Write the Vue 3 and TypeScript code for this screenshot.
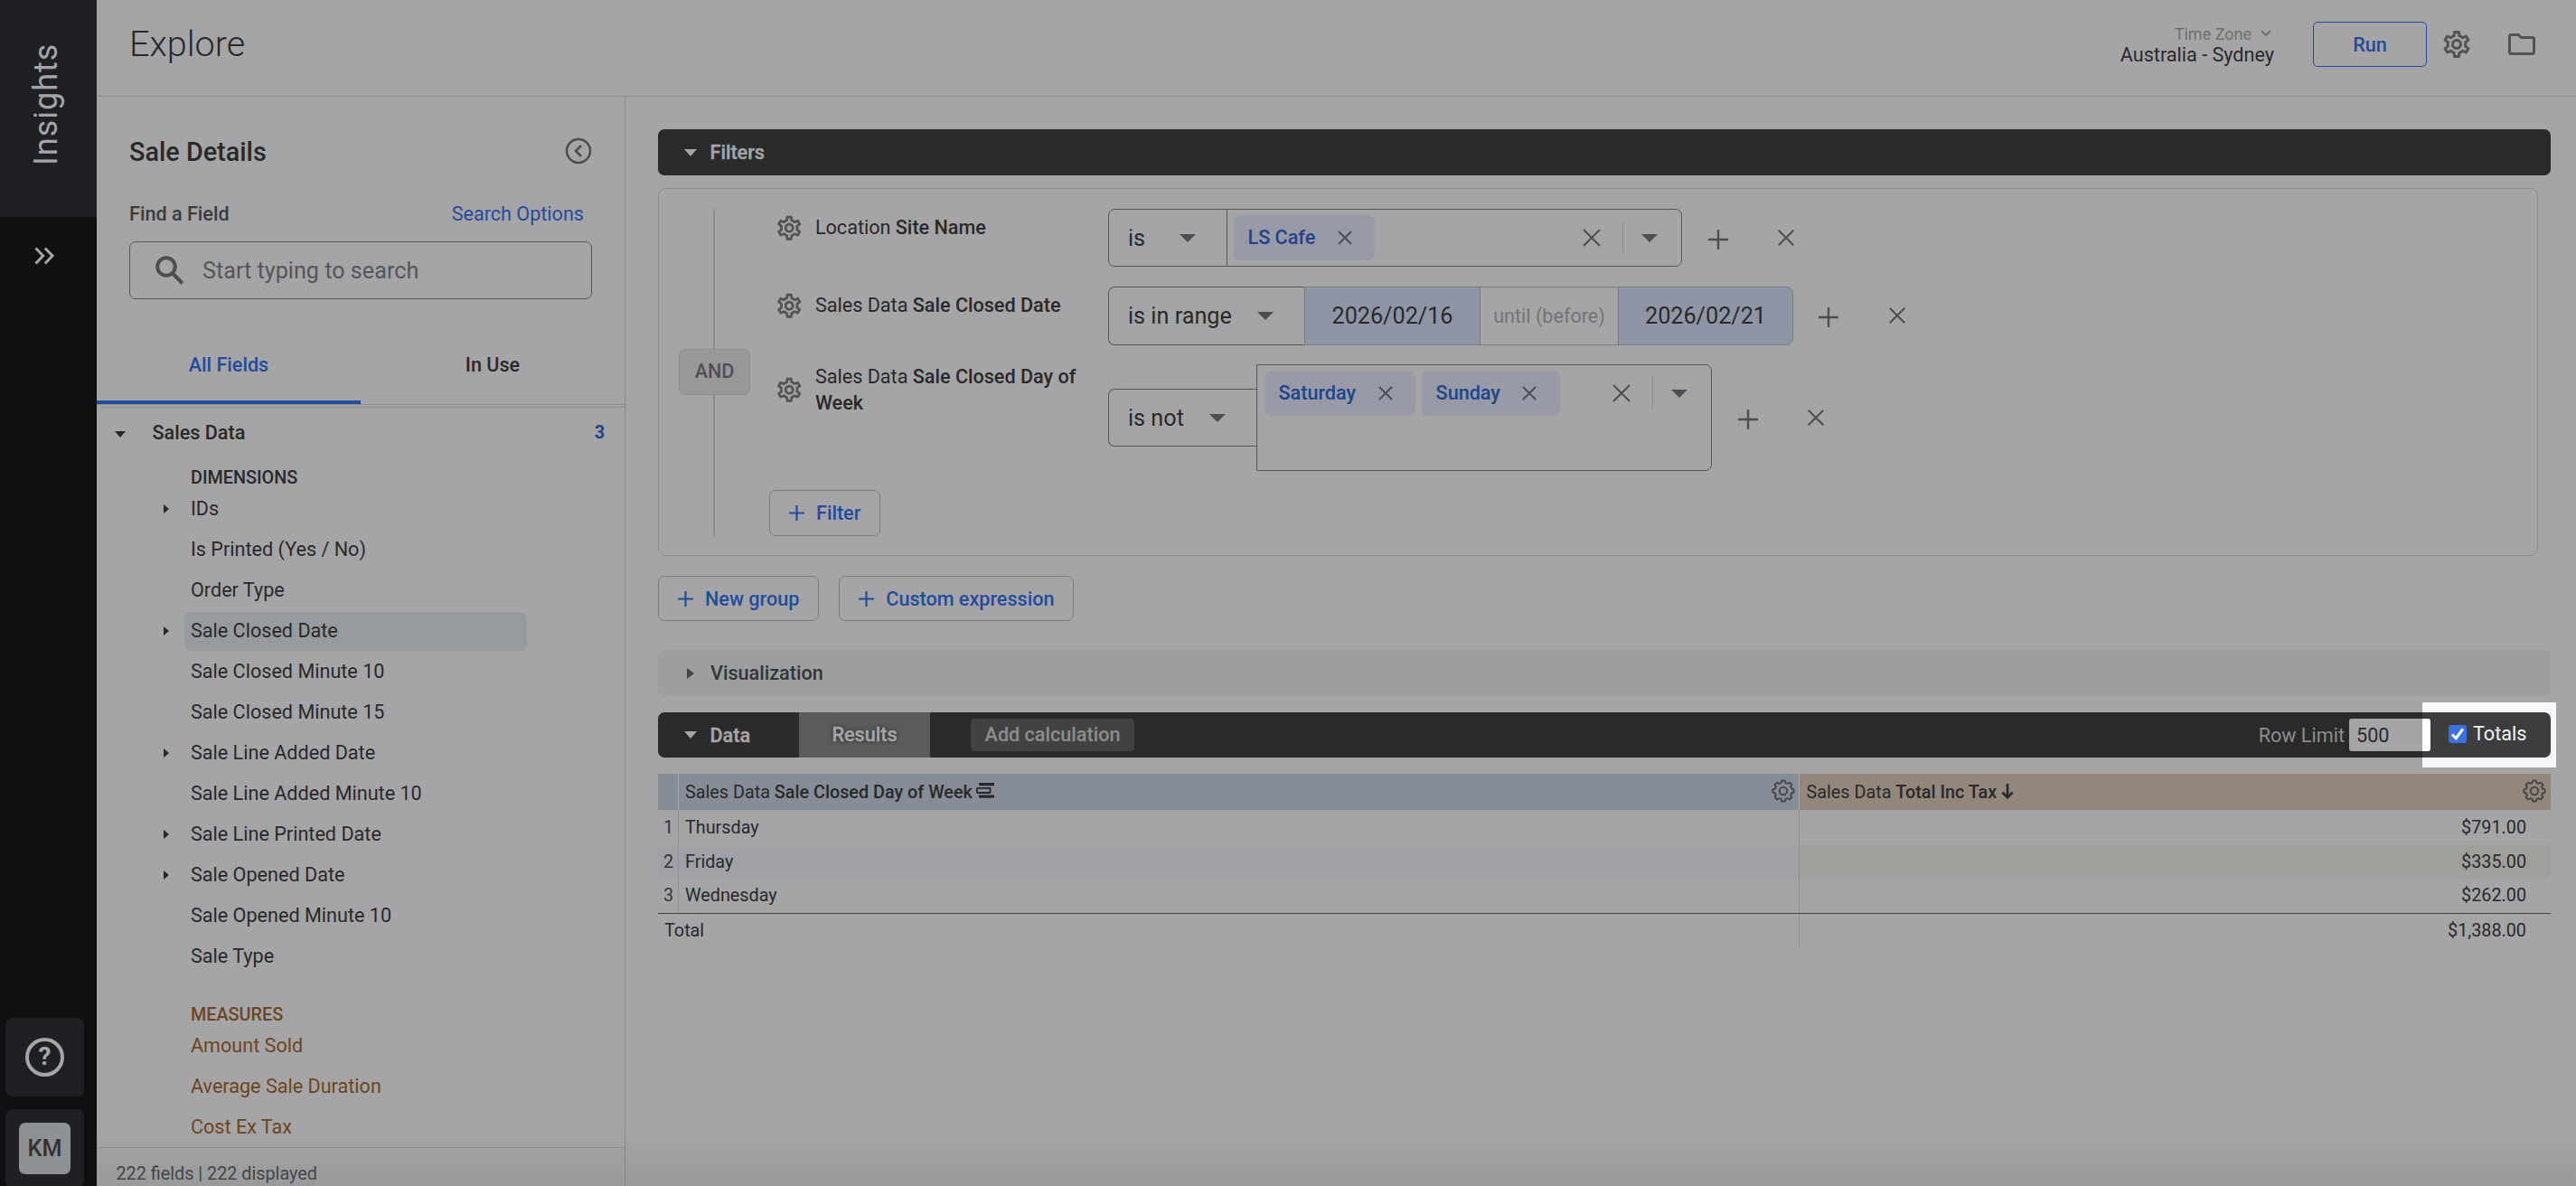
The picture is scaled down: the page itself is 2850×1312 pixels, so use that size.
<script setup lang="ts">
interface FieldItem {
  label: string
  group?: boolean
  selected?: boolean
}

interface FilterRow {
  view: string
  field: string
  op: string
  kind: 'one' | 'range' | 'many'
  chips: string[]
}

interface ResultRow {
  day: string
  total: string
}

const dimensions: FieldItem[] = [
  { label: 'IDs', group: true },
  { label: 'Is Printed (Yes / No)' },
  { label: 'Order Type' },
  { label: 'Sale Closed Date', group: true, selected: true },
  { label: 'Sale Closed Minute 10' },
  { label: 'Sale Closed Minute 15' },
  { label: 'Sale Line Added Date', group: true },
  { label: 'Sale Line Added Minute 10' },
  { label: 'Sale Line Printed Date', group: true },
  { label: 'Sale Opened Date', group: true },
  { label: 'Sale Opened Minute 10' },
  { label: 'Sale Type' },
]

const measures: string[] = ['Amount Sold', 'Average Sale Duration', 'Cost Ex Tax']

const filters: FilterRow[] = [
  { view: 'Location', field: 'Site Name', op: 'is', kind: 'one', chips: ['LS Cafe'] },
  { view: 'Sales Data', field: 'Sale Closed Date', op: 'is in range', kind: 'range', chips: [] },
  { view: 'Sales Data', field: 'Sale Closed Day of Week', op: 'is not', kind: 'many', chips: ['Saturday', 'Sunday'] },
]

const results: ResultRow[] = [
  { day: 'Thursday', total: '$791.00' },
  { day: 'Friday', total: '$335.00' },
  { day: 'Wednesday', total: '$262.00' },
]

const gearPath =
  'M19.43 12.98c.04-.32.07-.64.07-.98 0-.34-.03-.66-.07-.98l2.11-1.65c.19-.15.24-.42.12-.64l-2-3.46c-.09-.16-.26-.25-.44-.25-.06 0-.12.01-.17.03l-2.49 1c-.52-.4-1.08-.73-1.69-.98l-.38-2.65C14.46 2.18 14.25 2 14 2h-4c-.25 0-.46.18-.49.42l-.38 2.65c-.61.25-1.17.59-1.69.98l-2.49-1c-.06-.02-.12-.03-.18-.03-.17 0-.34.09-.43.25l-2 3.46c-.13.22-.07.49.12.64l2.11 1.65c-.04.32-.07.65-.07.98 0 .33.03.66.07.98l-2.11 1.65c-.19.15-.24.42-.12.64l2 3.46c.09.16.26.25.44.25.06 0 .12-.01.17-.03l2.49-1c.52.4 1.08.73 1.69.98l.38 2.65c.03.24.24.42.49.42h4c.25 0 .46-.18.49-.42l.38-2.65c.61-.25 1.17-.59 1.69-.98l2.49 1c.06.02.12.03.18.03.17 0 .34-.09.43-.25l2-3.46c.12-.22.07-.49-.12-.64l-2.11-1.65zm-1.98-1.71c.04.31.05.52.05.73 0 .21-.02.43-.05.73l-.14 1.13.89.7 1.08.84-.7 1.21-1.27-.51-1.04-.42-.9.68c-.43.32-.84.56-1.25.73l-1.06.43-.16 1.13-.2 1.35h-1.4l-.19-1.35-.16-1.13-1.06-.43c-.43-.18-.83-.41-1.23-.71l-.91-.7-1.06.43-1.27.51-.7-1.21 1.08-.84.89-.7-.14-1.13c-.03-.31-.05-.54-.05-.74s.02-.43.05-.73l.14-1.13-.89-.7-1.08-.84.7-1.21 1.27.51 1.04.42.9-.68c.43-.32.84-.56 1.25-.73l1.06-.43.16-1.13.2-1.35h1.39l.19 1.35.16 1.13 1.06.43c.43.18.83.41 1.23.71l.91.7 1.06-.43 1.27-.51.7 1.21-1.07.85-.89.7.14 1.13zM12 8c-2.21 0-4 1.79-4 4s1.79 4 4 4 4-1.79 4-4-1.79-4-4-4zm0 6c-1.1 0-2-.9-2-2s.9-2 2-2 2 .9 2 2-.9 2-2 2z'

// Eight-toothed cog outline used in the table column headers.
const cogPath = (() => {
  const parts: string[] = []
  for (let i = 0; i < 8; i++) {
    const steps: [number, number][] = [[-16, 9.3], [-8, 11.7], [8, 11.7], [16, 9.3]]
    for (const [offset, r] of steps) {
      const a = ((i * 45 + offset) * Math.PI) / 180
      parts.push(`${(13 + r * Math.cos(a)).toFixed(2)} ${(13 + r * Math.sin(a)).toFixed(2)}`)
    }
  }
  return `M${parts.join('L')}Z`
})()
</script>

<template>
  <div class="app">
    <nav class="rail">
      <div class="brand"><span>Insights</span></div>
      <svg class="expand" viewBox="0 0 24 20" width="24" height="20"><path d="M2.5 1.5l8.2 8.5-8.2 8.5M12.8 1.5L21 10l-8.2 8.5" /></svg>
      <div class="rail-end">
        <div class="rail-box"><div class="help">?</div></div>
        <div class="rail-box"><div class="avatar">KM</div></div>
      </div>
    </nav>

    <div class="page">
      <header class="top">
        <h1>Explore</h1>
        <div class="zone">
          <div class="zone-label">Time Zone<svg viewBox="0 0 12 8" width="12" height="8"><path d="M1 1l5 5 5-5" /></svg></div>
          <div class="zone-value">Australia - Sydney</div>
        </div>
        <button class="run">Run</button>
        <svg class="icon top-gear" viewBox="0 0 24 24"><path :d="gearPath" /></svg>
        <svg class="icon top-folder" viewBox="0 0 24 24"><path d="M9.17 6l2 2H20v10H4V6h5.17M10 4H4c-1.1 0-1.99.9-1.99 2L2 18c0 1.1.9 2 2 2h16c1.1 0 2-.9 2-2V8c0-1.1-.9-2-2-2h-8l-2-2z" /></svg>
      </header>

      <div class="body">
        <aside class="panel">
          <div class="panel-title">
            <h2>Sale Details</h2>
            <svg viewBox="0 0 30 30" width="30" height="30"><circle cx="15" cy="15" r="13" /><path d="M18 9l-6 6 6 6" /></svg>
          </div>
          <div class="find"><b>Find a Field</b><a>Search Options</a></div>
          <div class="search">
            <svg viewBox="0 0 32 32" width="32" height="32"><circle cx="12" cy="12" r="9.8" /><path d="M19 19.500l11 11" /></svg>
            <span>Start typing to search</span>
          </div>
          <div class="tabs"><div class="tab on">All Fields</div><div class="tab">In Use</div></div>
          <div class="list">
            <div class="view-row"><i class="tri-down"></i><b>Sales Data</b><em>3</em></div>
            <div class="section">DIMENSIONS</div>
            <div v-for="f in dimensions" :key="f.label" class="field">
              <span class="twist"><i v-if="f.group" class="tri-right"></i></span>
              <span class="name" :class="{ selected: f.selected }">{{ f.label }}</span>
            </div>
            <div class="section measures">MEASURES</div>
            <div v-for="m in measures" :key="m" class="field measure">
              <span class="twist"></span><span class="name">{{ m }}</span>
            </div>
          </div>
          <div class="count">222 fields | 222 displayed</div>
        </aside>

        <main class="main">
          <div class="bar dark"><i class="bar-down"></i><b>Filters</b></div>
          <section class="filters">
            <div class="and-col"><div class="and">AND</div></div>
            <div class="rows">
              <div v-for="r in filters" :key="r.field" class="row" :class="r.kind">
                <div class="label">
                  <svg class="icon gear" viewBox="0 0 24 24"><path :d="gearPath" /></svg>
                  <div class="label-text">{{ r.view }} <b>{{ r.field }}</b></div>
                </div>
                <div class="op"><span>{{ r.op }}</span><i class="drop"></i></div>
                <template v-if="r.kind === 'range'">
                  <div class="date first">2026/02/16</div>
                  <div class="until">until (before)</div>
                  <div class="date last">2026/02/21</div>
                </template>
                <div v-else class="multi">
                  <div v-for="c in r.chips" :key="c" class="chip">
                    <span>{{ c }}</span>
                    <svg viewBox="0 0 16 16" width="16" height="16"><path d="M1 1l14 14M15 1L1 15" /></svg>
                  </div>
                  <div class="multi-end">
                    <svg viewBox="0 0 20 20" width="20" height="20"><path d="M1 1l18 18M19 1L1 19" /></svg>
                    <i class="sep"></i>
                    <i class="drop"></i>
                  </div>
                </div>
                <div class="row-tools">
                  <svg class="plus" viewBox="0 0 22 22" width="22" height="22"><path d="M11 0v22M0 11h22" /></svg>
                  <svg class="cross" viewBox="0 0 18 18" width="18" height="18"><path d="M.7.7l16.600 16.600M17.300.7L.7 17.300" /></svg>
                </div>
              </div>
              <button class="add small"><svg viewBox="0 0 17 17" width="17" height="17"><path d="M8.500 0v17M0 8.500h17" /></svg>Filter</button>
            </div>
          </section>
          <div class="group-buttons">
            <button class="add"><svg viewBox="0 0 17 17" width="17" height="17"><path d="M8.500 0v17M0 8.500h17" /></svg>New group</button>
            <button class="add"><svg viewBox="0 0 17 17" width="17" height="17"><path d="M8.500 0v17M0 8.500h17" /></svg>Custom expression</button>
          </div>
          <div class="bar pale"><i class="bar-right"></i><b>Visualization</b></div>
          <div class="data-wrap">
            <div class="spotlight"></div>
            <div class="bar dark data-bar">
              <i class="bar-down"></i><b class="data-name">Data</b>
              <div class="results-tab">Results</div>
              <div class="calc">Add calculation</div>
              <div class="limit">Row Limit</div>
              <div class="limit-input">500</div>
              <div class="totals">
                <span class="check"><svg viewBox="0 0 20 20" width="20" height="20"><path d="M4 10.500l4.200 4.300L15.800 4.500" /></svg></span>
                <span>Totals</span>
              </div>
            </div>
          </div>
          <div class="table">
            <div class="tr head">
              <div class="c1"></div>
              <div class="c2">
                <span>Sales Data <b>Sale Closed Day of Week</b></span>
                <svg class="fill-icon" viewBox="0 0 20 17" width="20" height="17"><path d="M3 0h17v3.200H3zM3 13.600h17v3.200H3z" /><rect x="1" y="5.800" width="14.500" height="5.200" rx="0.500" /></svg>
                <svg class="cog" viewBox="0 0 26 26" width="26" height="26"><path :d="cogPath" /><circle cx="13" cy="13" r="4.200" /></svg>
              </div>
              <div class="c3">
                <span>Sales Data <b>Total Inc Tax</b></span>
                <svg class="sort" viewBox="0 0 14 17" width="14" height="17"><path d="M7 0v15M1.300 9.500L7 15.200l5.700-5.700" /></svg>
                <svg class="cog" viewBox="0 0 26 26" width="26" height="26"><path :d="cogPath" /><circle cx="13" cy="13" r="4.200" /></svg>
              </div>
            </div>
            <div v-for="(r, i) in results" :key="r.day" class="tr" :class="'r' + (i + 1)">
              <div class="c1">{{ i + 1 }}</div>
              <div class="c2">{{ r.day }}</div>
              <div class="c3">{{ r.total }}</div>
            </div>
            <div class="tr sum">
              <div class="sum-name">Total</div>
              <div class="c3">$1,388.00</div>
            </div>
          </div>
        </main>
      </div>
    </div>
    <div class="fade"></div>
  </div>
</template>

<style>
body {
  margin: 0;
  background: #a5a5a7;
}
</style>

<style scoped>
.app {
  position: relative;
  display: flex;
  width: 2850px;
  height: 1312px;
  overflow: hidden;
  background: #a5a5a7;
  color: #29292a;
  font-family: Roboto, "Liberation Sans", sans-serif;
  font-size: 21.6px;
}
.app * { box-sizing: border-box; }
b { font-weight: 500; }
i, em { font-style: normal; flex: none; }
svg { display: block; flex: none; fill: none; }
button { font: inherit; background: none; padding: 0; margin: 0; }
.icon { fill: #525356; }

/* left rail */
.rail { width: 107px; flex: none; background: #0f1012; display: flex; flex-direction: column; }
.brand { height: 240px; background: #1f2024; display: flex; justify-content: center; padding: 45px 6px 0 0; }
.brand span {
  writing-mode: vertical-rl;
  transform: rotate(180deg);
  height: 138px;
  line-height: 44px;
  font-size: 36px;
  letter-spacing: 1px;
  color: #a5a5a7;
  white-space: nowrap;
}
.expand { margin: 33px 0 0 37px; stroke: #a5a5a7; stroke-width: 3; }
.rail-end { margin-top: auto; height: 186px; padding-left: 6px; display: flex; flex-direction: column; gap: 14px; }
.rail-box { width: 87px; height: 87px; flex: none; border-radius: 8px; background: #1f2024; display: flex; align-items: center; justify-content: center; }
.help { width: 43px; height: 43px; border: 4px solid #a5a5a7; border-radius: 50%; color: #a5a5a7; font-weight: 700; font-size: 28px; line-height: 33px; text-align: center; }
.avatar { width: 57px; height: 57px; border-radius: 7px; background: #8d9194; color: #2f3134; font-weight: 500; font-size: 25.2px; line-height: 57px; text-align: center; }

.page { flex: 1; min-width: 0; display: flex; flex-direction: column; }
.top { height: 107px; flex: none; border-bottom: 1px solid #8c8c8e; display: flex; padding-left: 36px; }
h1 { margin: 24px auto 0 0; height: 50px; font-size: 39.6px; line-height: 50px; font-weight: 300; }
.zone { margin-top: 26px; text-align: right; margin-right: 43px; }
.zone-label { height: 22px; line-height: 23px; font-size: 18px; color: #6f6f71; display: flex; justify-content: flex-end; align-items: center; gap: 10px; margin-right: 3px; }
.zone-label svg { stroke: #6f6f71; stroke-width: 2; margin-top: -1px; }
.zone-value { line-height: 25px; }
.run { width: 126px; height: 50px; margin-top: 24px; border: 1.500px solid #234c9b; border-radius: 5px; color: #234c9b; font-weight: 500; }
.top-gear { width: 36px; height: 36px; margin: 31px 0 0 15px; }
.top-folder { width: 36px; height: 36px; margin: 31px 42px 0 36px; }

.body { flex: 1; min-height: 0; display: flex; }
.panel { width: 585px; flex: none; border-right: 1px solid #8c8c8e; display: flex; flex-direction: column; overflow: hidden; }
.panel-title { margin: 35px 36px 0 36px; height: 50px; display: flex; align-items: center; justify-content: space-between; flex: none; }
h2 { margin: 2px 0 0; font-size: 28.800px; font-weight: 500; }
.panel-title svg { stroke: #4b4c4f; stroke-width: 2.500; }
.find { margin: 30px 45px 0 36px; height: 29px; line-height: 29px; display: flex; justify-content: space-between; flex: none; }
.find b { color: #3a3b3d; }
.find a { color: #234c9b; }
.search { margin: 16px 36px 0; height: 64px; border: 1px solid #57585b; border-radius: 7px; display: flex; align-items: center; padding-left: 28px; flex: none; color: #55565a; font-size: 25.200px; }
.search svg { stroke: #4d4e51; stroke-width: 4; margin-right: 20px; }
.tabs { margin-top: 33px; height: 84px; display: flex; border-bottom: 1px solid #8c8c8e; flex: none; }
.tab { width: 292px; height: 83px; line-height: 79px; text-align: center; font-weight: 500; border-bottom: 4px solid transparent; }
.tab.on { color: #234c9b; border-color: #234c9b; }
.list { margin: 2px 0 0 4px; border-top: 1px solid #8c8c8e; height: 819px; flex: none; overflow: hidden; }
.view-row { height: 55px; display: flex; align-items: center; padding: 0 22px 0 16px; }
.tri-down { border: 6px solid transparent; border-top: 7px solid #29292a; border-bottom: 0; margin-top: 3px; }
.view-row b { margin: 0 auto 0 29.500px; }
.view-row em { color: #1f4489; font-weight: 700; font-size: 19.800px; }
.section { margin: 10px 0 0 100px; height: 24px; line-height: 26px; font-size: 19.800px; font-weight: 500; }
.section.measures { margin-top: 30px; color: #6b4620; }
.field { height: 45px; display: flex; }
.twist { width: 93px; padding: 18px 0 0 69.500px; }
.tri-right { display: block; width: 0; border: 5.500px solid transparent; border-left: 6px solid #29292a; border-right: 0; }
.name { margin-top: 2px; width: 379px; height: 43px; line-height: 41px; padding-left: 7px; border-radius: 7px; }
.name.selected { background: #979b9f; }
.measure { color: #6b4620; }
.count { border-top: 1px solid #8c8c8e; padding-left: 21.500px; line-height: 58px; font-size: 19.800px; color: #343536; flex: none; }

.main { flex: 1; min-width: 0; padding: 36px 28px 0 36px; }
.bar { height: 51px; border-radius: 7px; display: flex; align-items: center; padding-left: 29px; }
.dark { background: #2a2a2a; color: #a5a5a7; }
.dark b, .results-tab { -webkit-text-stroke: 0.4px #a5a5a7; }
.pale { background: #9c9e9f; color: #343536; margin-top: 32px; }
.bar-down { border: 7px solid transparent; border-top: 8px solid #a5a5a7; border-bottom: 0; margin-right: 14.500px; }
.bar-right { border: 6.500px solid transparent; border-left: 8px solid #434446; border-right: 0; margin: 0 18px 0 3px; }

.filters { margin-top: 14px; width: 2080px; height: 407px; border: 1px solid #8e8e90; border-radius: 8px; padding: 22px 0 0 22px; display: flex; }
.and-col { width: 79px; height: 362px; display: flex; align-items: center; background: linear-gradient(#8c8c8e, #8c8c8e) 38px 0 / 2px 100% no-repeat; }
.and { width: 79px; height: 51px; line-height: 48px; margin-top: -1px; text-align: center; font-weight: 500; background: #98989a; border: 1px solid #8e8e90; border-radius: 7px; color: #4f5053; }
.rows { margin-left: 21px; }
.row { display: flex; align-items: flex-start; height: 64px; }
.row.range { height: 65px; margin: 22px 0 21px; }
.row.many { height: 118px; margin-bottom: 21px; }
.label { width: 375px; display: flex; align-items: center; padding-left: 6px; margin-top: 4.500px; }
.many .label { margin-top: -1px; }
.gear { width: 32.400px; height: 32.400px; margin-right: 12.500px; }
.label-text { width: 305px; line-height: 29.300px; }
.op { height: 64px; width: 132px; flex: none; border: 1px solid #57585b; border-radius: 7px 0 0 7px; display: flex; align-items: center; justify-content: space-between; padding: 0 34px 0 21px; font-size: 25.200px; }
.range .op { width: 217px; height: 65px; border-right: 0; }
.many .op { width: 164px; margin-top: 27px; border-right: 0; }
.drop { display: block; border: 9px solid transparent; border-top: 9px solid #4d4e51; border-bottom: 0; }
.multi { height: 64px; width: 504px; flex: none; margin-left: -1px; border: 1px solid #57585b; border-radius: 0 7px 7px 0; display: flex; align-items: flex-start; padding: 6px 0 0 7px; }
.many .multi { height: 118px; margin-left: 0; padding-left: 8px; }
.chip { height: 50px; line-height: 48px; border-radius: 7px; background: #989ba7; color: #1f4489; font-weight: 500; display: flex; align-items: center; padding: 0 25.500px 1px 15.500px; margin-right: 7px; }
.chip svg { margin-left: 24.500px; margin-top: 1px; stroke: #4d4e51; stroke-width: 2; }
.multi-end { margin-left: auto; height: 50px; display: flex; align-items: center; padding-right: 26px; }
.multi-end svg { stroke: #4d4e51; stroke-width: 2; }
.sep { width: 1px; height: 36px; background: #8c8c8e; margin: 0 20.500px 0 23.500px; }
.date { width: 195px; height: 65px; line-height: 63px; text-align: center; font-size: 25.200px; background: #8e96a5; border: 1px solid #7a7c80; }
.date.last { border-radius: 0 7px 7px 0; width: 194px; }
.until { width: 152px; height: 65px; line-height: 63px; text-align: center; color: #747476; border: solid #7a7c80; border-width: 1px 0; }
.row-tools { display: flex; margin: 23px 0 0 29px; stroke: #4d4e51; stroke-width: 2.400; }
.many .row-tools { margin-top: 50px; }
.range .row-tools { margin-left: 28px; }
.cross { margin-left: 55px; stroke-width: 2; }
.range .cross { margin-left: 56px; }

.add { height: 50px; border: 1px solid #7c7c7e; border-radius: 7px; color: #234c9b; font-weight: 500; display: flex; align-items: center; padding: 0 21px; }
.add.small { height: 51px; }
.add svg { stroke: #234c9b; stroke-width: 2.200; margin-right: 13px; }
.group-buttons { display: flex; gap: 22px; margin-top: 22px; }

.data-wrap { position: relative; margin-top: 18px; }
/* bright cut-out that sits behind the right end of the data bar */
.spotlight { position: absolute; left: 1952px; top: -11px; width: 148px; height: 72px; background: #f7f8fb; }
.data-bar { position: relative; height: 50px; background: linear-gradient(90deg, #2a2a2a 1952px, #3c3d3f 1952px); }
.data-name { width: 98.500px; }
.results-tab { width: 145px; height: 50px; line-height: 50px; text-align: center; background: #595c5a; font-weight: 500; text-shadow: 0 0 4px #222; }
.calc { margin-left: 45px; width: 181px; height: 36px; line-height: 35px; text-align: center; border-radius: 4px; background: #424243; color: #8d8d8e; font-weight: 500; }
.limit { margin-left: auto; color: #8d8d8e; padding-right: 5px; }
.limit-input { width: 90px; height: 36px; line-height: 37px; padding-left: 8px; border-radius: 3px; background: linear-gradient(90deg, #a5a5a7 81px, #fff 81px); color: #29292a; }
.totals { width: 133px; padding-left: 20px; display: flex; align-items: center; color: #f4f5f7; margin-top: -3px; }
.check { width: 20px; height: 20px; border-radius: 3px; background: #3b70de; margin-right: 7px; }
.check svg { stroke: #fff; stroke-width: 3; }

.table { margin-top: 18px; font-size: 19.800px; }
.tr { display: flex; height: 38px; line-height: 38px; }
.c1 { width: 23px; flex: none; border-right: 1px solid #929294; padding-left: 6px; color: #343536; }
.c2 { width: 1240px; flex: none; border-right: 1px solid #929294; padding-left: 7px; }
.c3 { flex: 1; text-align: right; padding-right: 27px; }
.head { height: 40px; line-height: 41px; background: #868d97; }
.head .c1, .head .c2 { border-color: #a5a5a7; }
.head .c2, .head .c3 { display: flex; align-items: center; }
.head .c3 { background: #93877b; padding: 0 5px 0 7.500px; text-align: left; }
.head .c2 { padding-right: 4px; }
.cog { margin: -2px 0 0 auto; stroke: #47484b; stroke-width: 2; stroke-linejoin: round; }
.fill-icon { margin: -3px 0 0 4.500px; fill: #29292a; }
.fill-icon rect { fill: none; stroke: #29292a; stroke-width: 1.800; }
.sort { margin: -2px 0 0 5px; stroke: #29292a; stroke-width: 2.600; }
.r1 { height: 39px; line-height: 39.500px; }
.r2 { height: 37px; background: #a0a1a6; }
.r2 .c3 { background: #a09f9c; }
.sum { border-top: 1px solid #3f4042; height: 38px; }
.sum-name { width: 1263px; flex: none; border-right: 1px solid #929294; padding-left: 7px; }

.fade { position: absolute; left: 107px; right: 0; bottom: 0; height: 62px; background: linear-gradient(rgba(120, 124, 126, 0), rgba(120, 124, 126, 0.28)); pointer-events: none; }
</style>
